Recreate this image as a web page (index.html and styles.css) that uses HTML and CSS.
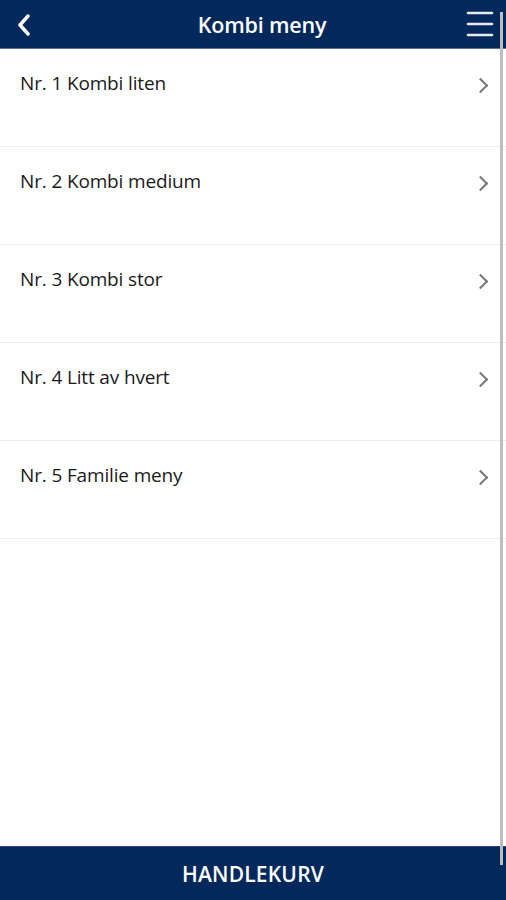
FILE: index.html
```html
<!DOCTYPE html>
<html lang="no">
<head>
<meta charset="utf-8">
<title>Kombi meny</title>
<link rel="stylesheet" href="styles.css">
</head>
<body>
<div class="app">
  <header class="topbar">
    <button class="icon-btn back" aria-label="Tilbake">
      <svg width="14" height="22" viewBox="0 0 14 22"><path d="M11 2 L3 11 L11 20" fill="none" stroke="#fff" stroke-width="3.4" stroke-linecap="round" stroke-linejoin="round"/></svg>
    </button>
    <h1 class="title">Kombi meny</h1>
    <button class="icon-btn menu" aria-label="Meny">
      <svg width="28" height="26" viewBox="0 0 28 26"><g stroke="#e8e8ee" stroke-width="2.6" stroke-linecap="round"><line x1="2" y1="2" x2="26" y2="2"/><line x1="2" y1="13" x2="26" y2="13"/><line x1="2" y1="24" x2="26" y2="24"/></g></svg>
    </button>
  </header>
  <main class="list">
    <a class="row" href="#"><span class="label">Nr. 1 Kombi liten</span><span class="chev"></span></a>
    <a class="row" href="#"><span class="label">Nr. 2 Kombi medium</span><span class="chev"></span></a>
    <a class="row" href="#"><span class="label">Nr. 3 Kombi stor</span><span class="chev"></span></a>
    <a class="row" href="#"><span class="label">Nr. 4 Litt av hvert</span><span class="chev"></span></a>
    <a class="row" href="#"><span class="label">Nr. 5 Familie meny</span><span class="chev"></span></a>
  </main>
  <footer class="bottombar">HANDLEKURV</footer>
  <div class="scrollbar"></div>
</div>
</body>
</html>
```
FILE: styles.css
```css
html, body {
  margin: 0;
  padding: 0;
  background: #fff;
}
.app {
  position: relative;
  width: 506px;
  height: 900px;
  display: flex;
  flex-direction: column;
  font-family: "Open Sans", "Liberation Sans", sans-serif;
  overflow: hidden;
}
.topbar {
  height: 48px;
  background: #03295c;
  border-bottom: 1px solid #5a6f93;
  display: flex;
  align-items: center;
  justify-content: space-between;
  padding: 0 12px 0 14px;
  flex: none;
}
.icon-btn {
  background: none;
  border: 0;
  padding: 0;
  display: flex;
  align-items: center;
}
.back { width: 40px; padding-left: 3px; padding-top: 1px; }
.menu { width: 40px; justify-content: flex-end; padding-right: 0; }
.title {
  margin: 0 0 0 16px;
  color: #fff;
  font-size: 21.5px;
  font-weight: 600;
  letter-spacing: -0.2px;
}
.list {
  flex: 1;
  display: flex;
  flex-direction: column;
}
.row {
  height: 97px;
  border-bottom: 1px solid #ececec;
  display: flex;
  justify-content: space-between;
  align-items: flex-start;
  padding: 0 16px 0 20px;
  text-decoration: none;
  color: #1a1a1a;
}
.label {
  font-size: 19px;
  letter-spacing: -0.15px;
  margin-top: 21px;
}
.chev {
  width: 9px;
  height: 9px;
  border-right: 2.4px solid #777;
  border-top: 2.4px solid #777;
  transform: rotate(45deg);
  margin-top: 31px;
  margin-right: 4px;
}
.bottombar {
  flex: none;
  height: 53px;
  background: #03295c;
  border-top: 1px solid #3b3b7a;
  color: #fff;
  display: flex;
  align-items: center;
  justify-content: center;
  font-size: 21px;
  font-weight: 600;
  letter-spacing: 0.2px;
}
.scrollbar {
  position: absolute;
  right: 3px;
  top: 12px;
  width: 3px;
  height: 853px;
  background: #bdbdbd;
}
```
